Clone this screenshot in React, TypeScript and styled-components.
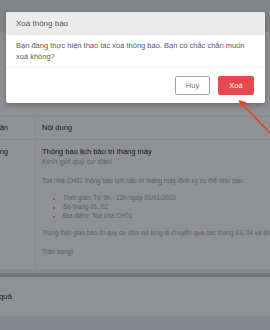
import React from "react";
import styled, { createGlobalStyle } from "styled-components";

const GlobalStyle = createGlobalStyle`
  html, body { margin: 0; padding: 0; background: #eceef0; }
  body { font-family: "Liberation Sans", Arial, sans-serif; }
  * { box-sizing: border-box; }
`;

const Page = styled.div`
  position: relative;
  width: 270px;
  height: 330px;
  overflow: hidden;
  display: flex;
  flex-direction: column;
  background: #eceef0;
`;

const TopBar = styled.div`
  height: 32px;
  background: #e6e8ea;
`;

const TabStrip = styled.div`
  height: 4px;
  background: #ffffff;
`;

const Upper = styled.div`
  height: 81px;
  display: flex;
  flex-direction: column;
  background: #fbfbfc;
  border-bottom: 1px solid #f0f1f2;
`;

const UpperLine = styled.div`
  margin-top: 49px;
  height: 1px;
  background: #ffffff;
`;

const Table = styled.div`
  display: grid;
  grid-template-columns: 36px 1fr;
  background: #ffffff;
`;

const Cell = styled.div<{ $head?: boolean; $first?: boolean }>`
  display: flex;
  overflow: hidden;
  white-space: nowrap;
  justify-content: ${(p) => (p.$first ? "flex-end" : "flex-start")};
  align-items: ${(p) => (p.$head ? "center" : "flex-start")};
  height: ${(p) => (p.$head ? "23px" : "130px")};
  padding: ${(p) =>
    p.$first
      ? p.$head
        ? "0 27px 0 0"
        : "7px 27px 0 0"
      : p.$head
      ? "0 0 0 6px"
      : "7px 0 0 6px"};
  border-bottom: 1px solid #eeeff1;
  border-right: ${(p) => (p.$first ? "1px solid #eeeff1" : "none")};
  font-size: 7.5px;
  line-height: 10px;
  color: #2f3235;
`;

const Content = styled.div`
  display: flex;
  flex-direction: column;
  white-space: nowrap;
`;

const ContentTitle = styled.div`
  font-size: 7.5px;
  line-height: 10px;
  color: #232629;
`;

const Lead = styled.div`
  font-size: 7.5px;
  line-height: 10px;
  color: #a9abae;
`;

const Small = styled.div<{ $gap?: number }>`
  font-size: 6.4px;
  line-height: 9px;
  color: #a6a8ab;
  margin-top: ${(p) => p.$gap ?? 0}px;
`;

const List = styled.ul`
  margin: 8px 0 0;
  padding-left: 21px;
  font-size: 6.4px;
  line-height: 9.3px;
  color: #a6a8ab;
  li::marker { font-size: 6px; }
`;

const Band = styled.div`
  height: 7px;
  background: #eef0f2;
  display: flex;
  flex-direction: column;
  justify-content: flex-end;
`;

const BandDark = styled.div`
  height: 4px;
  background: #c9ccd0;
`;

const FooterRow = styled.div`
  display: flex;
  background: #ffffff;
`;

const FooterCard = styled.div`
  height: 39px;
  width: 48px;
  display: flex;
  align-items: center;
  justify-content: flex-end;
  padding-right: 36px;
  overflow: hidden;
  white-space: nowrap;
  font-size: 8px;
  color: #2f3235;
`;

const Overlay = styled.div`
  position: absolute;
  inset: 0;
  background: rgba(6, 12, 20, 0.45);
`;

const Modal = styled.div`
  position: absolute;
  left: 6px;
  top: 12px;
  width: 259px;
  height: 91px;
  background: #ffffff;
  border-radius: 2px;
  box-shadow: 0 2px 5px rgba(0, 0, 0, 0.25);
  display: flex;
  flex-direction: column;
  overflow: hidden;
`;

const ModalHeader = styled.div`
  height: 23px;
  background: #ebebeb;
  display: flex;
  align-items: center;
  padding-left: 10px;
  font-size: 8px;
  color: #555555;
`;

const ModalBody = styled.div`
  height: 33px;
  padding: 5px 10px 0;
  font-size: 7.5px;
  line-height: 11px;
  color: #5a5a5a;
  border-bottom: 1px solid #f1f1f1;
`;

const ModalFooter = styled.div`
  flex: 1;
  display: flex;
  justify-content: flex-end;
  align-items: flex-start;
  gap: 8px;
  padding: 8px 11px 0 0;
`;

const Button = styled.button<{ $danger?: boolean }>`
  height: 19px;
  width: ${(p) => (p.$danger ? "36px" : "35px")};
  border-radius: 2px;
  border: 1px solid ${(p) => (p.$danger ? "#e5484f" : "#a2a2a2")};
  background: ${(p) => (p.$danger ? "#e5484f" : "#ffffff")};
  color: ${(p) => (p.$danger ? "#ffffff" : "#707070")};
  font-family: "Liberation Sans", Arial, sans-serif;
  font-size: 7.5px;
  padding: 0;
  display: flex;
  align-items: center;
  justify-content: center;
`;

const Arrow = styled.svg`
  position: absolute;
  left: 0;
  top: 0;
  pointer-events: none;
`;

export default function App() {
  return (
    <>
      <GlobalStyle />
      <Page>
        <TopBar />
        <TabStrip />
        <Upper>
          <UpperLine />
        </Upper>
        <Table>
          <Cell $head $first>Người nhận</Cell>
          <Cell $head>Nội dung</Cell>
          <Cell $first>Tất cả tầng</Cell>
          <Cell>
            <Content>
              <ContentTitle>Thông báo lịch bảo trì thang máy</ContentTitle>
              <Lead>Kính gửi quý cư dân!</Lead>
              <Small $gap={8.5}>Toà nhà CH01 thông báo lịch bảo trì thang máy định kỳ cụ thể như sau:</Small>
              <List>
                <li>Thời gian: Từ 9h - 12h ngày 01/01/2022</li>
                <li>Số thang 01, 02</li>
                <li>Địa điểm: Toà nhà CH01</li>
              </List>
              <Small $gap={8}>Trong thời gian bảo trì quý cư dân vui lòng di chuyển qua các thang 03, 04 và khu vực khác</Small>
              <Small $gap={9.5}>Trân trọng!</Small>
            </Content>
          </Cell>
        </Table>
        <Band>
          <BandDark />
        </Band>
        <FooterRow>
          <FooterCard>Kết quả</FooterCard>
        </FooterRow>
        <Overlay />
        <Modal>
          <ModalHeader>Xoá thông báo</ModalHeader>
          <ModalBody>Bạn đang thực hiện thao tác xoá thông báo. Bạn có chắc chắn muốn xoá không?</ModalBody>
          <ModalFooter>
            <Button>Huỷ</Button>
            <Button $danger>Xoá</Button>
          </ModalFooter>
        </Modal>
        <Arrow width="270" height="330" viewBox="0 0 270 330">
          <line x1="272" y1="135" x2="241" y2="103" stroke="#e8431e" strokeWidth="1.5" />
          <path d="M238.5 100 L246.5 102.3 L241.2 107.5 Z" fill="#e8431e" />
        </Arrow>
      </Page>
    </>
  );
}
